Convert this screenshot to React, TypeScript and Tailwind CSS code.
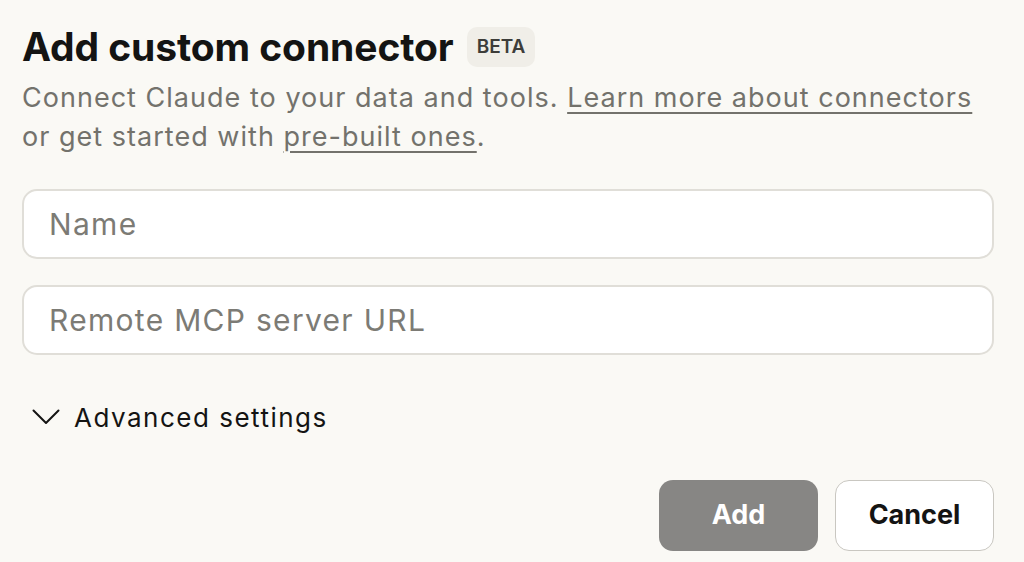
export default function App() {
  return (
    <div className="min-h-[562px] w-full bg-[#faf9f5] font-['Inter',sans-serif] text-[#141413]">
      <div className="flex flex-col pl-[22px] pr-[30px] pt-[27px]">
        <div className="flex h-[40px] items-center gap-[13px]">
          <h1 className="text-[39px] font-bold leading-[40px] tracking-[-0.1px]">Add custom connector</h1>
          <span className="flex h-[40px] items-center rounded-[10px] bg-[#f0eee8] px-[10px] text-[19px] font-semibold text-[#3d3d3a]">
            BETA
          </span>
        </div>

        <p className="mt-[11px] text-[27px] leading-[39px] tracking-[1.02px] text-[#73726c]">
          Connect Claude to your data and tools.{' '}
          <a href="#" className="underline decoration-[2px] underline-offset-[5px]">Learn more about connectors</a>
          <br />
          or get started with{' '}
          <a href="#" className="underline decoration-[2px] underline-offset-[5px]">pre-built ones</a>.
        </p>

        <div className="mt-[33px] flex flex-col gap-[26px]">
          <input
            placeholder="Name"
            className="h-[70px] w-full rounded-[15px] border-2 border-[#e0ded8] bg-white px-[25px] text-[30px] tracking-[1.3px] text-[#141413] outline-none placeholder:text-[#7c7b75]"
          />
          <input
            placeholder="Remote MCP server URL"
            className="h-[70px] w-full rounded-[15px] border-2 border-[#e0ded8] bg-white px-[25px] text-[30px] tracking-[1.3px] text-[#141413] outline-none placeholder:text-[#7c7b75]"
          />
        </div>

        <button className="mt-[42px] flex h-[40px] items-center gap-[14px] self-start pl-[10px] text-[26px] tracking-[1.5px] text-[#141413]">
          <svg width="28" height="16" viewBox="0 0 28 16" fill="none" stroke="currentColor" strokeWidth="2" strokeLinecap="round" strokeLinejoin="round">
            <path d="M1.5 1.5 L14 14 L26.5 1.5" />
          </svg>
          Advanced settings
        </button>

        <div className="mt-[43px] flex justify-end gap-[17px]">
          <button className="h-[71px] w-[159px] rounded-[14px] bg-[#878684] text-[27px] font-bold text-white">Add</button>
          <button className="h-[71px] w-[159px] rounded-[14px] border border-[#c9c7c1] bg-white text-[27px] font-bold text-[#141413]">
            Cancel
          </button>
        </div>
      </div>
    </div>
  );
}
